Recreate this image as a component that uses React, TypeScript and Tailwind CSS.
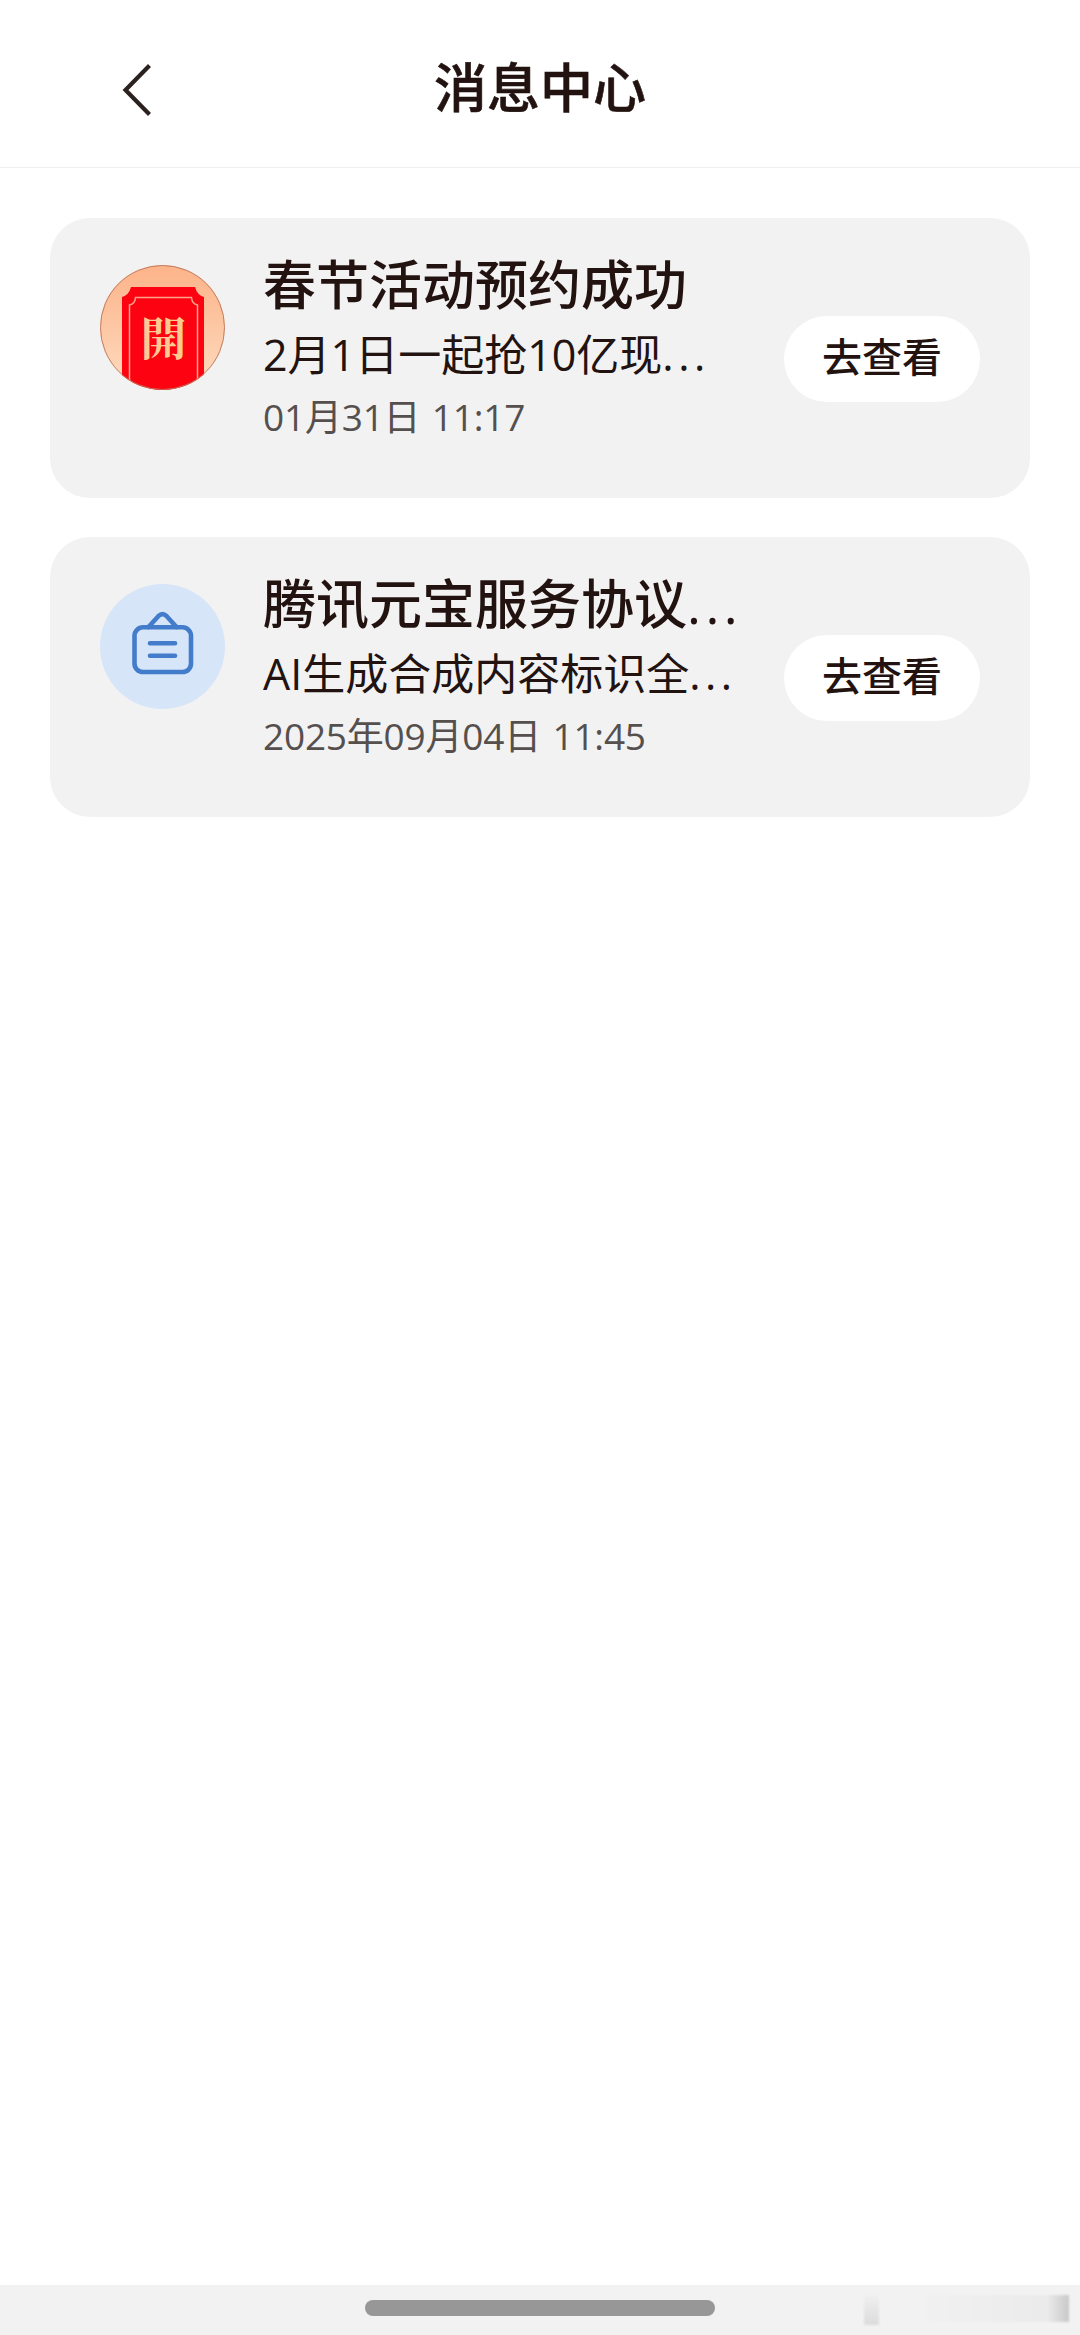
import type { ReactNode } from 'react'

type Message = {
  id: number
  icon: ReactNode
  title: string
  titleCut?: boolean
  summary: string
  time: string
}

function RedPacketIcon() {
  return (
    <svg viewBox="0 0 125 125" className="size-[125px] shrink-0">
      <defs>
        <linearGradient id="peach" x1="0" y1="0" x2="0" y2="1">
          <stop offset="0" stopColor="#fdb389" />
          <stop offset="1" stopColor="#fddcc0" />
        </linearGradient>
        <clipPath id="round">
          <circle cx="62.5" cy="62.5" r="62.5" />
        </clipPath>
      </defs>
      <g clipPath="url(#round)">
        <rect width="125" height="125" fill="url(#peach)" />
        <path d="M22 125V32q7-2 9-10H95q2 8 9 10V125Z" fill="#fd0210" />
        <path
          d="M29.500 125V40q5.500-1 6-7.500H91.500q.5 6.500 6 7.500V125"
          fill="none"
          stroke="#fda58a"
          strokeWidth="1.500"
        />
        <text
          x="63.500"
          y="89.500"
          textAnchor="middle"
          fontSize="46"
          fontWeight="700"
          fill="#fdca92"
          fontFamily="'Noto Serif CJK TC', 'Noto Sans CJK TC', serif"
        >
          開
        </text>
      </g>
      <circle cx="62.500" cy="62.500" r="62" fill="none" stroke="#b9785f" strokeWidth="0.900" />
    </svg>
  )
}

function NoticeIcon() {
  return (
    <svg
      viewBox="0 0 125 125"
      className="size-[125px] shrink-0 rounded-full bg-[#d7e5f8]"
      fill="none"
      stroke="#437ccb"
      strokeWidth="4.600"
      strokeLinecap="round"
    >
      <rect x="34.500" y="43.300" width="56.500" height="44.700" rx="8.500" />
      <path d="M48.500 43 58.500 32Q62.500 28.300 66.500 32L76.500 43M50 59.300H75M50 71.800H75" />
    </svg>
  )
}

const messages: Message[] = [
  {
    id: 1,
    icon: <RedPacketIcon />,
    title: '春节活动预约成功',
    summary: '2月1日一起抢10亿现',
    time: '01月31日 11:17',
  },
  {
    id: 2,
    icon: <NoticeIcon />,
    title: '腾讯元宝服务协议',
    titleCut: true,
    summary: 'AI生成合成内容标识全',
    time: '2025年09月04日 11:45',
  },
]

function MessageCard({ icon, title, titleCut, summary, time }: Message) {
  return (
    <li className="flex h-[280px] rounded-[40px] bg-[#f2f2f2] px-[50px]">
      <div className="pt-[47px]">{icon}</div>
      <div className="ml-[38px] min-w-0 flex-1 pt-[32px] whitespace-nowrap">
        <h2 className="h-[70px] text-[53px] leading-[70px] font-medium text-[#221310]">
          {title}
          {titleCut && <span className="tracking-[4.5px]">...</span>}
        </h2>
        <p className="mt-[5px] h-[60px] text-[43px] leading-[60px] text-[#221310]">
          {summary}
          <span className="tracking-[4.5px]">...</span>
        </p>
        <p className="mt-[4px] h-[56px] text-[37px] leading-[56px] tracking-[-0.2px] text-[#55504e] [word-spacing:2px]">
          {time}
        </p>
      </div>
      <button className="mt-[98px] h-[86px] w-[196px] shrink-0 rounded-full bg-white pb-1 text-[40px] leading-[82px] font-medium text-[#221310]">
        去查看
      </button>
    </li>
  )
}

export default function App() {
  return (
    <div className="flex h-[2335px] w-[1080px] flex-col overflow-hidden bg-white font-['Open_Sans','Noto_Sans_CJK_SC',sans-serif]">
      {/* Header */}
      <header className="grid h-[168px] grid-cols-[1fr_auto_1fr] items-center border-b border-[#f0f0f0] pt-[8px]">
        <button className="mt-[5px] ml-[120px] flex w-[36px]">
          <svg viewBox="0 0 36 56" className="h-[56px] w-[36px]" fill="none" stroke="#2b2220" strokeWidth="4.200">
            <path d="M29.500 3.500 5.500 28 29.500 52.500" />
          </svg>
        </button>
        <h1 className="text-[53px] leading-[80px] font-medium text-[#221310] [-webkit-text-stroke:0.6px_#221310]">消息中心</h1>
      </header>

      {/* Messages */}
      <ul className="flex flex-1 flex-col gap-[39px] px-[50px] pt-[50px]">
        {messages.map((m) => (
          <MessageCard key={m.id} {...m} />
        ))}
      </ul>

      {/* Gesture bar */}
      <footer className="grid h-[50px] grid-cols-[1fr_350px_1fr] bg-[#f2f2f2]">
        <div className="col-start-2 mt-[15px] h-[16px] rounded-full bg-[#979797]" />
        <div className="flex pt-[10px] pr-[11px] pl-[149px]">
          <div className="h-[30px] w-[15px] bg-gradient-to-b from-[#f0f0f0] to-[#dcdcdc] blur-[1px]" />
          <div className="ml-auto h-[27px] w-[145px] bg-gradient-to-r from-[#f1f1f1] via-[#ebebeb] via-85% to-[#c9c9c9] blur-[1px]" />
        </div>
      </footer>
    </div>
  )
}
